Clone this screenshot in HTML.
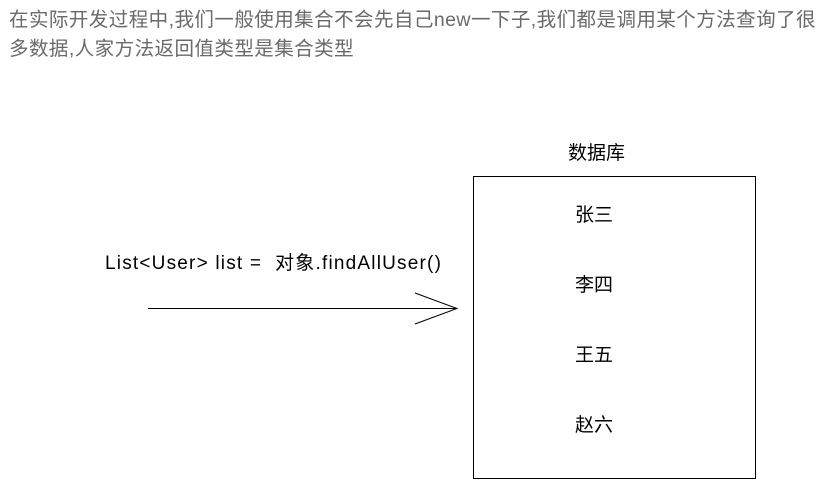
<!DOCTYPE html>
<html><head><meta charset="utf-8"><style>
body{margin:0;width:823px;height:486px;background:#fff;position:relative;overflow:hidden;font-family:"Liberation Sans","Noto Sans CJK SC",sans-serif}
.p{position:absolute;left:9px;color:#6a6a6a;font-size:19.5px;white-space:nowrap;letter-spacing:0.45px;line-height:30px}
.t{position:absolute;color:#000;font-size:19px;white-space:nowrap;line-height:24px}
</style></head><body>
<div class="p" style="top:5px">在实际开发过程中,我们一般使用集合不会先自己new一下子,我们都是调用某个方法查询了很</div>
<div class="p" style="top:34px">多数据,人家方法返回值类型是集合类型</div>
<div class="t" style="left:568px;top:142px">数据库</div>
<div style="position:absolute;left:473px;top:176px;width:281px;height:301px;border:1px solid #000"></div>
<div class="t" style="left:575px;top:204px">张三</div>
<div class="t" style="left:575px;top:274px">李四</div>
<div class="t" style="left:575px;top:344px">王五</div>
<div class="t" style="left:575px;top:414px">赵六</div>
<div class="t" style="left:105px;top:252px;letter-spacing:1.2px">List&lt;User&gt; list =&nbsp; 对象.findAllUser()</div>
<svg width="823" height="486" style="position:absolute;left:0;top:0">
<g stroke="#000" stroke-width="1" fill="none">
<line x1="148" y1="308.5" x2="457" y2="308.5"/>
<polyline points="415,293 457,308.5 415,324"/>
</g></svg>
</body></html>
